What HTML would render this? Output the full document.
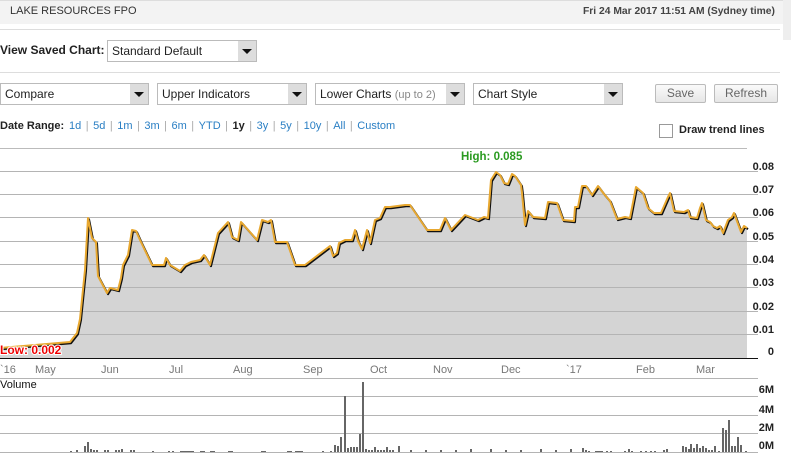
<!DOCTYPE html>
<html><head><meta charset="utf-8"><style>
*{margin:0;padding:0;box-sizing:border-box}
body{width:791px;height:462px;overflow:hidden;background:#fff;font-family:"Liberation Sans",Arial,sans-serif;position:relative;color:#222}
.a{position:absolute}
.hdr{left:0;top:0;width:783px;height:24px;background:#f3f3f3;border-top:1px solid #ddd}
.sel{position:absolute;height:22px;border:1px solid #bbb;background:#fff;font-size:12px;line-height:20px;padding-left:4px;color:#222}
.sel .ar{position:absolute;right:0;top:0;width:18px;height:20px;background:#ddd}
.sel .ar:after{content:"";position:absolute;left:4px;top:8px;border-left:5px solid transparent;border-right:5px solid transparent;border-top:5px solid #111}
.btn{position:absolute;height:19px;border:1px solid #bbb;border-radius:2px;background:linear-gradient(#fafafa,#e6e6e6);font-size:12px;color:#666;text-align:center;line-height:17px}
.lk{color:#2a7fc4}
.sep{color:#aaa;margin:0 4.5px}
</style></head><body>
<div class="a hdr"></div>
<div class="a" style="left:10px;top:5px;font-size:11px;color:#333">LAKE RESOURCES FPO</div>
<div class="a" style="left:583px;top:6px;font-size:10.3px;font-weight:bold;color:#444;white-space:nowrap">Fri 24 Mar 2017 11:51 AM (Sydney time)</div>
<div class="a" style="left:783px;top:0;width:8px;height:40px;background:#eee"></div>
<div class="a" style="left:0;top:29px;width:780px;height:1px;background:#ddd"></div>
<div class="a" style="left:0;top:43px;font-size:12px;font-weight:bold;color:#222">View Saved Chart:</div>
<div class="sel" style="left:107px;top:40px;width:150px;font-size:12px">Standard Default<div class="ar"></div></div>
<div class="a" style="left:0;top:72px;width:780px;height:1px;background:#ddd"></div>
<div class="sel" style="left:0;top:83px;width:149px">Compare<div class="ar"></div></div>
<div class="sel" style="left:157px;top:83px;width:150px">Upper Indicators<div class="ar"></div></div>
<div class="sel" style="left:315px;top:83px;width:150px">Lower Charts <span style="color:#888;font-size:11px">(up to 2)</span><div class="ar"></div></div>
<div class="sel" style="left:473px;top:83px;width:150px">Chart Style<div class="ar"></div></div>
<div class="btn" style="left:655px;top:84px;width:51px">Save</div>
<div class="btn" style="left:714px;top:84px;width:64px">Refresh</div>
<div class="a" style="left:0;top:120px;font-size:11px;white-space:nowrap"><b style="color:#222">Date Range:</b></div>
<div class="a" style="left:69px;top:120px;font-size:11px;white-space:nowrap"><span class="lk">1d</span><span class="sep">|</span><span class="lk">5d</span><span class="sep">|</span><span class="lk">1m</span><span class="sep">|</span><span class="lk">3m</span><span class="sep">|</span><span class="lk">6m</span><span class="sep">|</span><span class="lk">YTD</span><span class="sep">|</span><b>1y</b><span class="sep">|</span><span class="lk">3y</span><span class="sep">|</span><span class="lk">5y</span><span class="sep">|</span><span class="lk">10y</span><span class="sep">|</span><span class="lk">All</span><span class="sep">|</span><span class="lk">Custom</span></div>
<div class="a" style="left:659px;top:124px;width:14px;height:14px;border:1px solid #999;background:#fff"></div>
<div class="a" style="left:679px;top:124px;font-size:11px;font-weight:bold;color:#222">Draw trend lines</div>
<svg class="a" style="left:0;top:0" width="791" height="462">
<g stroke="#bbb" stroke-width="1">
<line x1="0" y1="148.5" x2="747" y2="148.5"/>
</g>
<polygon fill="#d4d4d4" points="0,348 70,342 77,333 80,319 85,270 88,218 92,238 96,242 98,276 107,293 110,288 118,290 121,278 123,265 128,255 132,230 136,231 140,240 152,265 164,265 166,258 170,265 180,271 185,265 191,262 200,260 204,255 210,265 218,233 228,222 232,237 238,240 241,222 257,240 262,220 268,222 271,220 275,242 287,242 295,265 305,265 330,246 333,256 337,253 339,243 345,240 352,240 355,230 358,241 362,249 367,230 370,243 375,220 380,218 385,207 390,207 405,205 410,205 427,230 440,230 445,218 451,230 465,215 478,220 484,217 488,218 491,180 496,172 500,175 504,183 508,184 512,174 515,176 521,185 522,193 525,225 528,211 533,217 545,218 548,202 557,203 563,220 574,221 575,207 578,207 582,186 586,186 592,195 598,186 604,194 610,201 617,219 625,217 630,218 636,187 643,193 648,208 654,213 661,213 668,197 670,193 674,211 684,212 688,210 690,217 697,218 700,208 702,203 706,220 710,222 713,226 717,228 720,226 723,233 728,220 732,217 734,213 741,232 744,226 747,228 747,358 0,358"/>
<g stroke="#b4b4b4" stroke-width="1">
<line x1="0" y1="171.5" x2="758" y2="171.5"/><line x1="0" y1="194.5" x2="758" y2="194.5"/><line x1="0" y1="217.5" x2="758" y2="217.5"/><line x1="0" y1="241.5" x2="758" y2="241.5"/><line x1="0" y1="264.5" x2="758" y2="264.5"/><line x1="0" y1="287.5" x2="758" y2="287.5"/><line x1="0" y1="311.5" x2="758" y2="311.5"/><line x1="0" y1="334.5" x2="758" y2="334.5"/>
<line x1="0" y1="378.5" x2="758" y2="378.5"/><line x1="0" y1="396.5" x2="758" y2="396.5"/><line x1="0" y1="415.5" x2="758" y2="415.5"/><line x1="0" y1="433.5" x2="758" y2="433.5"/><line x1="0" y1="452.5" x2="758" y2="452.5"/>
</g>
<g transform="translate(1,1.2)"><polyline fill="none" stroke="#111" stroke-width="2" stroke-linejoin="round" points="0,348 70,342 77,333 80,319 85,270 88,218 92,238 96,242 98,276 107,293 110,288 118,290 121,278 123,265 128,255 132,230 136,231 140,240 152,265 164,265 166,258 170,265 180,271 185,265 191,262 200,260 204,255 210,265 218,233 228,222 232,237 238,240 241,222 257,240 262,220 268,222 271,220 275,242 287,242 295,265 305,265 330,246 333,256 337,253 339,243 345,240 352,240 355,230 358,241 362,249 367,230 370,243 375,220 380,218 385,207 390,207 405,205 410,205 427,230 440,230 445,218 451,230 465,215 478,220 484,217 488,218 491,180 496,172 500,175 504,183 508,184 512,174 515,176 521,185 522,193 525,225 528,211 533,217 545,218 548,202 557,203 563,220 574,221 575,207 578,207 582,186 586,186 592,195 598,186 604,194 610,201 617,219 625,217 630,218 636,187 643,193 648,208 654,213 661,213 668,197 670,193 674,211 684,212 688,210 690,217 697,218 700,208 702,203 706,220 710,222 713,226 717,228 720,226 723,233 728,220 732,217 734,213 741,232 744,226 747,228"/></g>
<polyline fill="none" stroke="#e8a830" stroke-width="2" stroke-linejoin="round" points="0,348 70,342 77,333 80,319 85,270 88,218 92,238 96,242 98,276 107,293 110,288 118,290 121,278 123,265 128,255 132,230 136,231 140,240 152,265 164,265 166,258 170,265 180,271 185,265 191,262 200,260 204,255 210,265 218,233 228,222 232,237 238,240 241,222 257,240 262,220 268,222 271,220 275,242 287,242 295,265 305,265 330,246 333,256 337,253 339,243 345,240 352,240 355,230 358,241 362,249 367,230 370,243 375,220 380,218 385,207 390,207 405,205 410,205 427,230 440,230 445,218 451,230 465,215 478,220 484,217 488,218 491,180 496,172 500,175 504,183 508,184 512,174 515,176 521,185 522,193 525,225 528,211 533,217 545,218 548,202 557,203 563,220 574,221 575,207 578,207 582,186 586,186 592,195 598,186 604,194 610,201 617,219 625,217 630,218 636,187 643,193 648,208 654,213 661,213 668,197 670,193 674,211 684,212 688,210 690,217 697,218 700,208 702,203 706,220 710,222 713,226 717,228 720,226 723,233 728,220 732,217 734,213 741,232 744,226 747,228"/>
<line x1="0" y1="358.5" x2="758" y2="358.5" stroke="#111" stroke-width="1"/>
<g font-family="Liberation Sans,Arial,sans-serif" font-size="11" font-weight="bold" fill="#222" text-anchor="end">
<text x="774" y="170">0.08</text><text x="774" y="193">0.07</text><text x="774" y="216">0.06</text><text x="774" y="240">0.05</text><text x="774" y="263">0.04</text><text x="774" y="286">0.03</text><text x="774" y="310">0.02</text><text x="774" y="333">0.01</text><text x="774" y="355">0</text>
<text x="774" y="393">6M</text><text x="774" y="413">4M</text><text x="774" y="431">2M</text><text x="774" y="449">0M</text>
</g>
<g font-family="Liberation Sans,Arial,sans-serif" font-size="11" fill="#777">
<text x="0" y="373">`16</text><text x="35" y="373">May</text><text x="101" y="373">Jun</text><text x="169" y="373">Jul</text><text x="233" y="373">Aug</text><text x="303" y="373">Sep</text><text x="370" y="373">Oct</text><text x="433" y="373">Nov</text><text x="501" y="373">Dec</text><text x="566" y="373">`17</text><text x="636" y="373">Feb</text><text x="696" y="373">Mar</text>
</g>
<text x="0" y="388" font-family="Liberation Sans,Arial,sans-serif" font-size="11" fill="#111">Volume</text>
<text x="0" y="354" font-family="Liberation Sans,Arial,sans-serif" font-size="12" font-weight="bold" fill="#e00" stroke="#fff" stroke-width="2" paint-order="stroke">Low: 0.002</text>
<text x="461" y="160" font-family="Liberation Sans,Arial,sans-serif" font-size="11.5" font-weight="bold" fill="#2a9a20">High: 0.085</text>
<g fill="#666">
<rect x="84" y="446" width="2" height="6"/><rect x="87" y="442" width="2" height="10"/><rect x="90" y="449" width="2" height="3"/><rect x="93" y="450" width="2" height="2"/><rect x="96" y="450" width="2" height="2"/><rect x="104" y="450" width="2" height="2"/><rect x="107" y="450" width="2" height="2"/><rect x="115" y="450" width="2" height="2"/><rect x="118" y="450" width="2" height="2"/><rect x="121" y="449" width="2" height="3"/><rect x="130" y="450" width="2" height="2"/><rect x="133" y="450" width="2" height="2"/><rect x="76" y="450" width="2" height="2"/><rect x="70" y="451" width="2" height="1"/>
<rect x="152" y="451" width="2" height="1"/><rect x="168" y="451" width="2" height="1"/><rect x="172" y="451" width="2" height="1"/><rect x="180" y="451" width="14" height="1"/><rect x="200" y="451" width="5" height="1"/><rect x="210" y="451" width="5" height="1"/><rect x="228" y="451" width="5" height="1"/><rect x="261" y="451" width="5" height="1"/><rect x="287" y="451" width="5" height="1"/><rect x="295" y="451" width="8" height="1"/><rect x="322" y="451" width="2" height="1"/><rect x="330" y="451" width="2" height="1"/>
<rect x="334" y="445" width="2" height="7"/><rect x="337" y="446" width="2" height="6"/><rect x="340" y="437" width="2" height="15"/><rect x="344" y="396" width="2" height="56"/><rect x="347" y="448" width="2" height="4"/><rect x="350" y="447" width="2" height="5"/><rect x="353" y="447" width="2" height="5"/><rect x="356" y="447" width="2" height="5"/><rect x="359" y="434" width="2" height="18"/><rect x="362" y="382" width="2" height="70"/><rect x="365" y="449" width="2" height="3"/><rect x="368" y="450" width="2" height="2"/><rect x="371" y="450" width="2" height="2"/><rect x="374" y="447" width="2" height="5"/><rect x="377" y="450" width="2" height="2"/><rect x="380" y="450" width="2" height="2"/><rect x="383" y="450" width="2" height="2"/><rect x="386" y="447" width="2" height="5"/><rect x="389" y="450" width="2" height="2"/><rect x="392" y="450" width="2" height="2"/><rect x="398" y="446" width="2" height="6"/>
<rect x="410" y="450" width="2" height="2"/><rect x="425" y="450" width="2" height="2"/><rect x="440" y="450" width="2" height="2"/><rect x="455" y="450" width="2" height="2"/><rect x="470" y="449" width="2" height="3"/><rect x="490" y="449" width="2" height="3"/><rect x="505" y="450" width="2" height="2"/><rect x="520" y="450" width="2" height="2"/><rect x="540" y="449" width="2" height="3"/><rect x="555" y="450" width="2" height="2"/><rect x="570" y="449" width="2" height="3"/>
<rect x="582" y="448" width="2" height="4"/><rect x="585" y="450" width="2" height="2"/><rect x="588" y="451" width="2" height="1"/><rect x="595" y="451" width="8" height="1"/><rect x="606" y="451" width="2" height="1"/><rect x="610" y="451" width="2" height="1"/><rect x="624" y="451" width="2" height="1"/><rect x="628" y="449" width="2" height="3"/><rect x="631" y="451" width="2" height="1"/><rect x="640" y="451" width="2" height="1"/><rect x="645" y="451" width="2" height="1"/><rect x="650" y="451" width="2" height="1"/><rect x="654" y="451" width="2" height="1"/><rect x="663" y="450" width="2" height="2"/><rect x="666" y="449" width="2" height="3"/>
<rect x="682" y="446" width="2" height="6"/><rect x="685" y="447" width="2" height="5"/><rect x="688" y="449" width="2" height="3"/><rect x="690" y="444" width="2" height="8"/><rect x="693" y="448" width="2" height="4"/><rect x="696" y="444" width="2" height="8"/><rect x="699" y="448" width="2" height="4"/><rect x="702" y="446" width="2" height="6"/><rect x="705" y="448" width="2" height="4"/><rect x="708" y="450" width="2" height="2"/><rect x="711" y="450" width="2" height="2"/><rect x="714" y="446" width="2" height="6"/><rect x="718" y="451" width="2" height="1"/><rect x="722" y="428" width="2" height="24"/><rect x="725" y="430" width="2" height="22"/><rect x="728" y="420" width="2" height="32"/><rect x="731" y="446" width="2" height="6"/><rect x="734" y="446" width="2" height="6"/><rect x="737" y="437" width="2" height="15"/><rect x="740" y="445" width="2" height="7"/><rect x="745" y="451" width="2" height="1"/>
</g>
</svg>
</body></html>
